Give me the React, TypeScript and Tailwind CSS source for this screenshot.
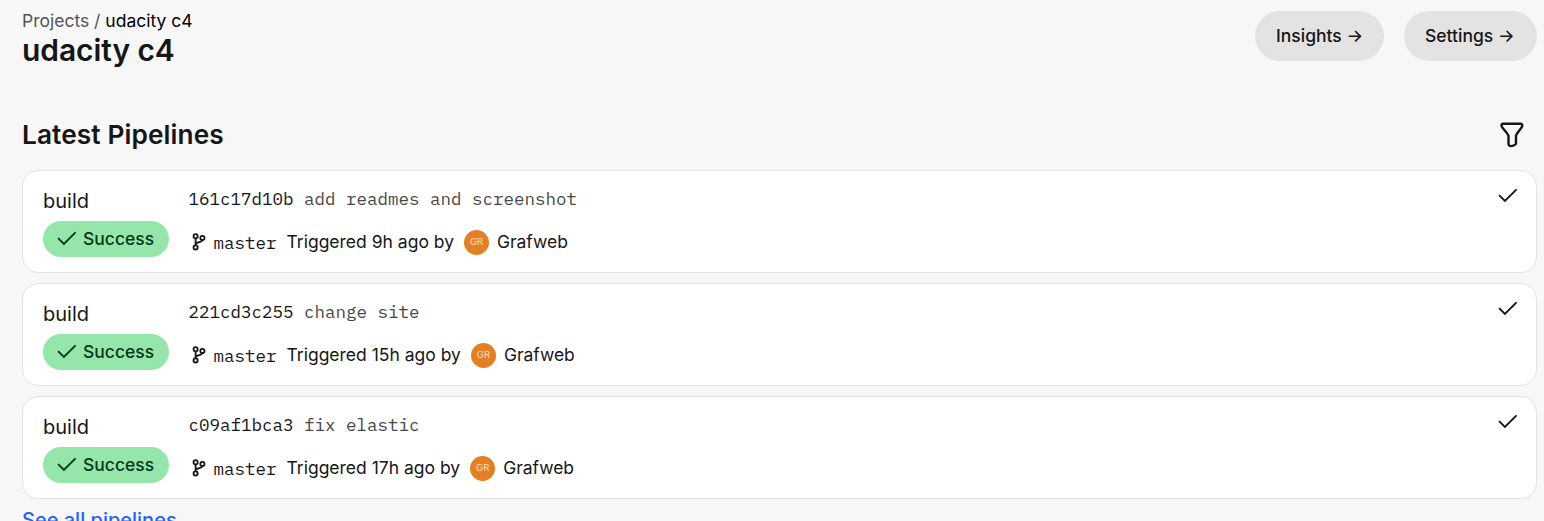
type Pipeline = { sha: string; message: string; age: string };

const pipelines: Pipeline[] = [
  { sha: "161c17d10b", message: "add readmes and screenshot", age: "9h" },
  { sha: "221cd3c255", message: "change site", age: "15h" },
  { sha: "c09af1bca3", message: "fix elastic", age: "17h" },
];

function Check({ className }: { className: string }) {
  return (
    <svg viewBox="0 0 20 16" fill="none" stroke="currentColor" strokeWidth="1.9" className={className}>
      <path d="M1.6 7.6 L6.9 12.9 L18 1.8" strokeLinecap="round" />
    </svg>
  );
}

function Branch() {
  return (
    <svg viewBox="0 0 14 18" fill="none" stroke="currentColor" strokeWidth="1.8" className="h-[18px] w-[14px]">
      <circle cx="3.6" cy="3.3" r="2.1" />
      <circle cx="10.4" cy="4.9" r="2.1" />
      <circle cx="3.6" cy="14.4" r="2.1" />
      <path d="M3.6 5.4V12.3M10.3 7C10 9.6 5.6 8.6 3.7 10.8" />
    </svg>
  );
}

function Funnel() {
  return (
    <svg viewBox="0 0 24 26" fill="none" stroke="currentColor" strokeWidth="2.4" strokeLinejoin="round" className="h-[26px] w-6">
      <path d="M3 1.7H20.6C22.3 1.7 22.6 3.4 21.9 4.9C21 6.6 16 11.9 16 13.9V21.4C16 22.8 12.6 24.1 10.9 24.1C9.3 24.1 8.5 23.2 8.5 21.9V14C8.5 12.1 2.8 6.8 1.9 4.8C1.2 3.1 1.5 1.7 3 1.7Z" />
    </svg>
  );
}

function NavButton({ label, className }: { label: string; className: string }) {
  return (
    <button className={`flex h-[50px] items-center whitespace-nowrap rounded-full bg-[#e3e3e3] pl-[21px] text-[17.5px] font-medium ${className}`}>
      {label} →
    </button>
  );
}

function PipelineCard({ sha, message, age }: Pipeline) {
  return (
    <article className="flex h-[103px] rounded-[16px] border border-[#e3e3e3] bg-white pl-5 pr-[18px]">
      <div className="w-[145.5px] pt-[17px]">
        <div className="h-[33px] text-[20px] leading-[26px]">build</div>
        <div className="flex h-9 w-[126px] items-center gap-[6px] rounded-full bg-[#94e6ab] pl-[14px] text-[17.5px] font-medium text-[#04381a]">
          <Check className="h-4 w-5" />
          <span>Success</span>
        </div>
      </div>
      <div className="grow pt-[17px] text-[17.5px]">
        <div className="whitespace-pre font-['IBM_Plex_Mono','Liberation_Mono',monospace] leading-[22px]">
          {sha} <span className="text-[#484848]">{message}</span>
        </div>
        <div className="mt-[19px] flex h-[26px] items-center">
          <span className="ml-[3.5px] w-[21.5px]">
            <Branch />
          </span>
          <span className="w-[73px] pt-[2px] font-['IBM_Plex_Mono','Liberation_Mono',monospace]">master</span>
          <span>Triggered {age} ago by</span>
          <span className="ml-[10px] mr-2 flex size-[25px] items-center justify-center rounded-full bg-[#e67e22] text-[9.5px] text-[#fbe0c8]">
            GR
          </span>
          <span className="tracking-[-0.05px]">Grafweb</span>
        </div>
      </div>
      <Check className="mt-[16.5px] h-4 w-5" />
    </article>
  );
}

export default function App() {
  return (
    <main className="h-[521px] overflow-hidden bg-[#f7f7f7] pl-[22px] pr-[7px] font-['Inter',sans-serif] text-[#161616]">
      <header className="flex h-[110px] justify-between pt-[11px]">
        <div>
          <nav className="text-[17.5px] leading-5 text-[#555]">
            Projects / <span className="text-black">udacity c4</span>
          </nav>
          <h1 className="text-[30px] font-semibold leading-[38px] tracking-[-0.08px]">udacity c4</h1>
        </div>
        <div className="flex gap-5">
          <NavButton label="Insights" className="w-[129px]" />
          <NavButton label="Settings" className="w-[133px]" />
        </div>
      </header>
      <section>
        <div className="flex h-[60px] items-start justify-between pr-[13px]">
          <h2 className="pt-[9px] text-[26.25px] font-semibold leading-8 tracking-[0.1px]">Latest Pipelines</h2>
          <span className="pt-[12px]">
            <Funnel />
          </span>
        </div>
        <div className="flex flex-col gap-[10px]">
          {pipelines.map((p) => (
            <PipelineCard key={p.sha} {...p} />
          ))}
        </div>
        <a className="mt-[9px] block text-[20px] font-medium leading-6 text-[#1f62ff]">See all pipelines</a>
      </section>
    </main>
  );
}
